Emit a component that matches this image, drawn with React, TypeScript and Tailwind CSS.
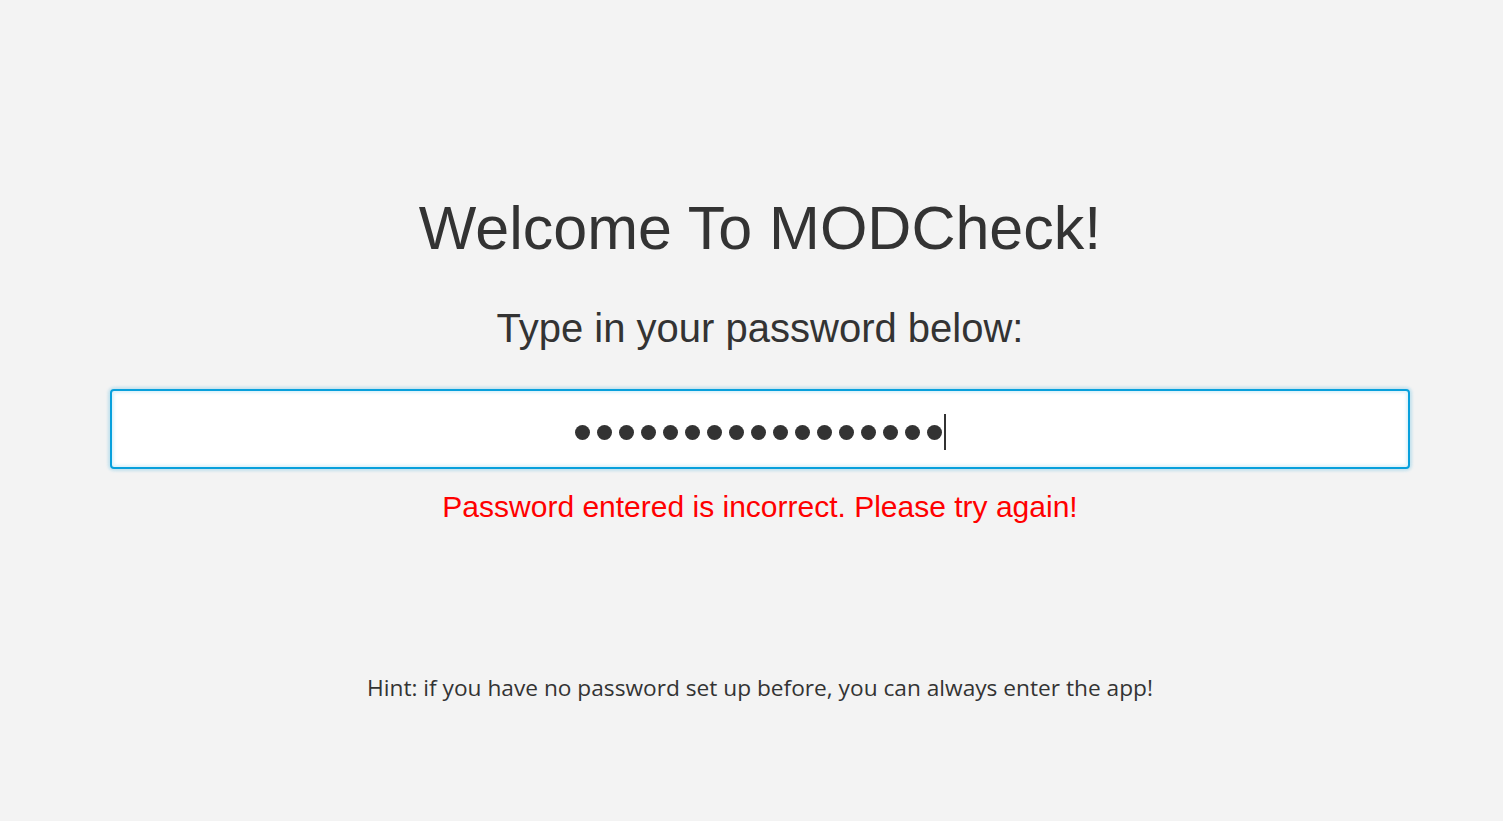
import React from 'react'

const DOTS = 17

const App = () => {
  return (
    <div className="min-h-[821px] w-full bg-[#f3f3f3] pl-[17px] text-[#333333]">
      <div className="flex flex-col items-center">
        <h1 className="mt-[198px] text-[61px] leading-[60px] font-normal font-['Liberation_Sans',Arial,sans-serif]">
          Welcome To MODCheck!
        </h1>
        <p className="mt-[50px] text-[40px] leading-[40px] font-['Liberation_Sans',Arial,sans-serif]">
          Type in your password below:
        </p>

        {/* password field, drawn so the caret stays visible */}
        <div className="mt-[41px] flex h-[80px] w-[1300px] items-center justify-center rounded-[4px] border-2 border-[#08a0dc] bg-white shadow-[0_0_3px_2px_rgba(8,160,220,0.2),inset_0_0_3px_2px_rgba(8,160,220,0.14)]">
          <div className="mt-[6px] flex items-center gap-[7px]">
            {Array.from({ length: DOTS }).map((_, i) => (
              <span key={i} className="block h-[15px] w-[15px] rounded-full bg-[#333333]" />
            ))}
            <span className="-ml-[5px] block h-[36px] w-[2px] bg-[#333333]" />
          </div>
        </div>

        <p className="mt-[23px] text-[30px] leading-[30px] text-[#ff0000] font-['Liberation_Sans',Arial,sans-serif]">
          Password entered is incorrect. Please try again!
        </p>

        <p className="mt-[151px] text-[22.7px] leading-[30px] font-['Open_Sans',sans-serif]">
          Hint: if you have no password set up before, you can always enter the app!
        </p>
      </div>
    </div>
  )
}

export default App
